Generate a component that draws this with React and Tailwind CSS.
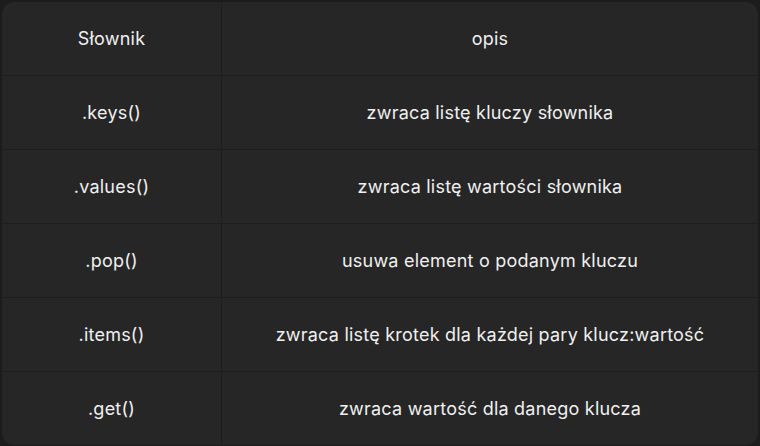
import React from "react";

const rows = [
  [".keys()", "zwraca listę kluczy słownika"],
  [".values()", "zwraca listę wartości słownika"],
  [".pop()", "usuwa element o podanym kluczu"],
  [".items()", "zwraca listę krotek dla każdej pary klucz:wartość"],
  [".get()", "zwraca wartość dla danego klucza"],
];

const App = () => {
  return (
    <div className="w-[760px] h-[446px] bg-[#1c1c1c] p-[2px] font-['Inter',sans-serif] text-[18px] tracking-[0.22px] text-[#f0f0f0]">
      <div className="bg-[#262626] rounded-[12px] overflow-hidden">
        {/* header */}
        <div className="flex h-[73px]">
          <div className="w-[220px] flex items-center justify-center border-r border-[#1e1e1e]">Słownik</div>
          <div className="flex-1 flex items-center justify-center">opis</div>
        </div>
        {rows.map(([name, desc]) => (
          <div key={name} className="flex h-[74px] border-t border-[#1e1e1e]">
            <div className="w-[220px] flex items-center justify-center border-r border-[#1e1e1e]">{name}</div>
            <div className="flex-1 flex items-center justify-center">{desc}</div>
          </div>
        ))}
      </div>
    </div>
  );
};

export default App;
